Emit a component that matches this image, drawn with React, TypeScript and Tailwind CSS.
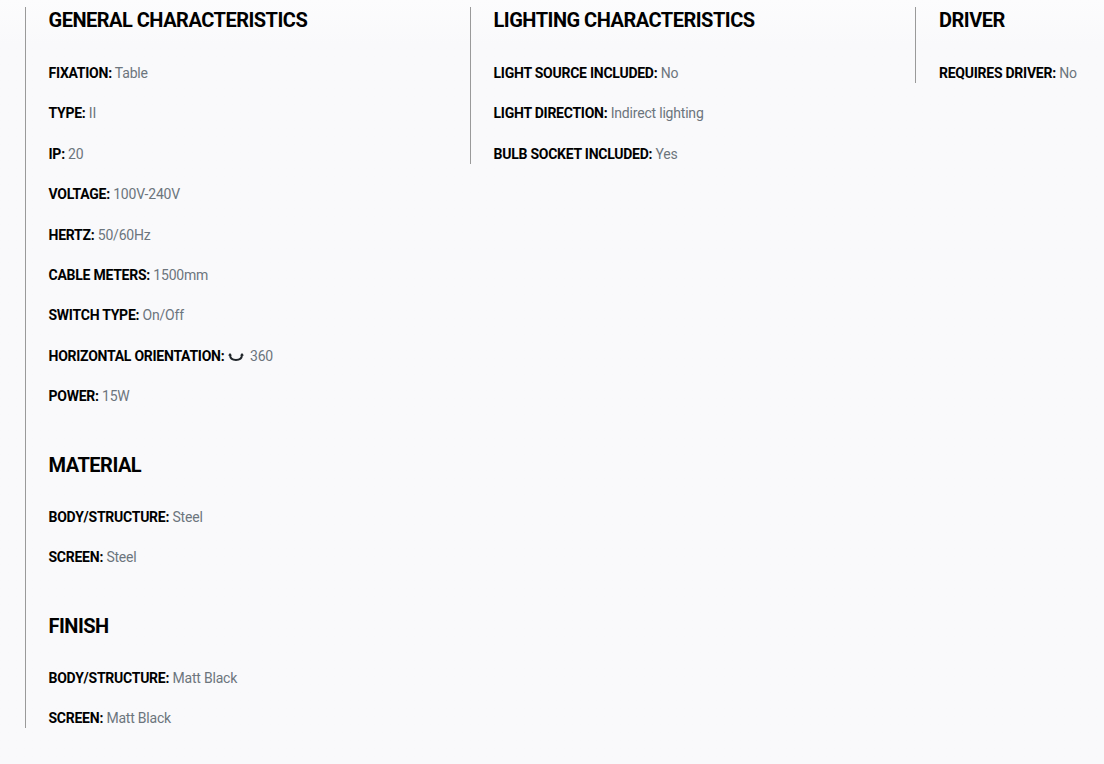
const general = [
  { label: "FIXATION", value: "Table" },
  { label: "TYPE", value: "II" },
  { label: "IP", value: "20" },
  { label: "VOLTAGE", value: "100V-240V" },
  { label: "HERTZ", value: "50/60Hz" },
  { label: "CABLE METERS", value: "1500mm" },
  { label: "SWITCH TYPE", value: "On/Off" },
  { label: "HORIZONTAL ORIENTATION", value: "360", icon: true },
  { label: "POWER", value: "15W" },
]
const lighting = [
  { label: "LIGHT SOURCE INCLUDED", value: "No" },
  { label: "LIGHT DIRECTION", value: "Indirect lighting" },
  { label: "BULB SOCKET INCLUDED", value: "Yes" },
]
const driver = [{ label: "REQUIRES DRIVER", value: "No" }]
const material = [
  { label: "BODY/STRUCTURE", value: "Steel" },
  { label: "SCREEN", value: "Steel" },
]
const finish = [
  { label: "BODY/STRUCTURE", value: "Matt Black" },
  { label: "SCREEN", value: "Matt Black" },
]

type Item = { label: string; value: string; icon?: boolean }

function RotateIcon() {
  return (
    <svg width="16" height="10" viewBox="0 0 16 10" className="mr-[3px] inline-block align-[-1px]" fill="none">
      <path d="M2 3C2.2 6.4 4.8 8 8 8s5.8-1.6 6-5" stroke="#1f2429" strokeWidth="2" />
      <path d="M0 3.4h4L2 1z M12 3.4h4L14 1z" fill="#1f2429" />
    </svg>
  )
}

function Spec({ item }: { item: Item }) {
  return (
    <p className="text-sm leading-[20.4px] tracking-[-0.2px] text-[#6c757d]">
      <strong className="font-bold tracking-[-0.25px] text-black">{item.label}:</strong>{" "}
      {item.icon && <RotateIcon />}
      {item.icon && " "}
      {item.value}
    </p>
  )
}

function Section({ title, items, first }: { title: string; items: Item[]; first?: boolean }) {
  return (
    <div className={first ? "" : "mt-[45.5px]"}>
      <h4 className={`${first ? "mb-[29.9px]" : "mb-[28.6px]"} text-xl leading-[26px] font-bold tracking-[-0.5px] text-black`}>{title}</h4>
      <div className="flex flex-col gap-5">
        {items.map((item) => (
          <Spec key={item.label} item={item} />
        ))}
      </div>
    </div>
  )
}

export default function App() {
  return (
    <div
      className="flex h-[764px] w-[1104px] items-start overflow-hidden bg-gradient-to-b from-[#fcfcfd] to-[#f9f9fb] to-[45px] pt-[7px] pl-[25px]"
      style={{ fontFamily: "Roboto, sans-serif" }}
    >
      <div className="w-[445px] shrink-0 border-l border-[#9a9a9a] pl-[22.5px]">
        <Section first title="GENERAL CHARACTERISTICS" items={general} />
        <Section title="MATERIAL" items={material} />
        <Section title="FINISH" items={finish} />
      </div>
      <div className="w-[445px] shrink-0 border-l border-[#9a9a9a] pl-[22.5px]">
        <Section first title="LIGHTING CHARACTERISTICS" items={lighting} />
      </div>
      <div className="w-[445px] shrink-0 border-l border-[#9a9a9a] pl-[23px]">
        <Section first title="DRIVER" items={driver} />
      </div>
    </div>
  )
}
